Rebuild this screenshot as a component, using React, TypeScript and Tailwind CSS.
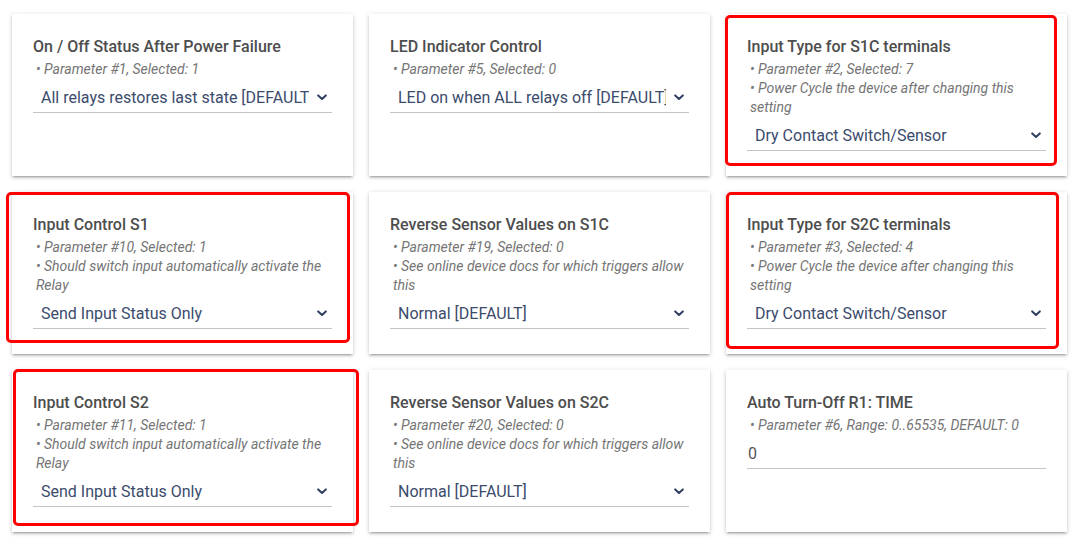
import React from "react"

type Setting = {
  title: string
  notes: string[]
  value: string
  kind?: "select" | "input"
  mark?: string
}

const settings: Setting[] = [
  {
    title: "On / Off Status After Power Failure",
    notes: ["Parameter #1, Selected: 1"],
    value: "All relays restores last state [DEFAULT]",
  },
  {
    title: "LED Indicator Control",
    notes: ["Parameter #5, Selected: 0"],
    value: "LED on when ALL relays off [DEFAULT]",
  },
  {
    title: "Input Type for S1C terminals",
    notes: ["Parameter #2, Selected: 7", "Power Cycle the device after changing this setting"],
    value: "Dry Contact Switch/Sensor",
    mark: "left-[-1px] top-[1px] w-[332px] h-[151px]",
  },
  {
    title: "Input Control S1",
    notes: ["Parameter #10, Selected: 1", "Should switch input automatically activate the Relay"],
    value: "Send Input Status Only",
    mark: "left-[-6px] top-0 w-[344px] h-[151px]",
  },
  {
    title: "Reverse Sensor Values on S1C",
    notes: ["Parameter #19, Selected: 0", "See online device docs for which triggers allow this"],
    value: "Normal [DEFAULT]",
  },
  {
    title: "Input Type for S2C terminals",
    notes: ["Parameter #3, Selected: 4", "Power Cycle the device after changing this setting"],
    value: "Dry Contact Switch/Sensor",
    mark: "left-0 top-0 w-[333px] h-[157px]",
  },
  {
    title: "Input Control S2",
    notes: ["Parameter #11, Selected: 1", "Should switch input automatically activate the Relay"],
    value: "Send Input Status Only",
    mark: "left-[1px] top-[-1px] w-[346px] h-[157px]",
  },
  {
    title: "Reverse Sensor Values on S2C",
    notes: ["Parameter #20, Selected: 0", "See online device docs for which triggers allow this"],
    value: "Normal [DEFAULT]",
  },
  {
    title: "Auto Turn-Off R1: TIME",
    notes: ["Parameter #6, Range: 0..65535, DEFAULT: 0"],
    value: "0",
    kind: "input",
  },
]

function Chevron() {
  return (
    <svg width="10" height="7" viewBox="0 0 10 7" className="shrink-0">
      <path d="M1.2 1.4 L5 5 L8.8 1.4" fill="none" stroke="#2f3f60" strokeWidth="2" strokeLinecap="round" strokeLinejoin="round" />
    </svg>
  )
}

function SettingCard({ s }: { s: Setting }) {
  return (
    <div className="relative bg-white h-[162px] px-[21px] pt-[23px] shadow-[0_2px_2px_0_rgba(0,0,0,0.14),0_3px_1px_-2px_rgba(0,0,0,0.12),0_1px_5px_0_rgba(0,0,0,0.16)]">
      <div className="text-[16px] leading-[20px] font-medium text-[#4d4d4d]">{s.title}</div>
      <div className="mt-[3px] pl-[3px] text-[14px] leading-[19px] italic text-[#757575]">
        {s.notes.map((n) => (
          <div key={n}>• {n}</div>
        ))}
      </div>
      {s.kind === "input" ? (
        <div className="mt-[2px] h-[32px] flex items-center border-b border-[#c4c4c4] text-[16px] text-[#555] pl-[1px] pt-[2px]">
          {s.value}
        </div>
      ) : (
        <div className="mt-[2px] h-[32px] flex items-center border-b border-[#c4c4c4] pl-2 pr-[5px] pt-[2px] gap-[8px]">
          <div className="flex-1 overflow-hidden whitespace-nowrap text-[16px] text-[#3b4b6d]">{s.value}</div>
          <Chevron />
        </div>
      )}
      {s.mark && (
        <div className={"absolute border-[3px] border-[#ff0000] rounded-[5px] pointer-events-none " + s.mark} />
      )}
    </div>
  )
}

export default function App() {
  return (
    <div className="min-h-[539px] w-[1072px] bg-white font-['Roboto',sans-serif] pl-3 pt-[14px]">
      <div className="grid grid-cols-[341px_341px_341px] gap-x-4 gap-y-[16px]">
        {settings.map((s) => (
          <SettingCard key={s.title} s={s} />
        ))}
      </div>
    </div>
  )
}
